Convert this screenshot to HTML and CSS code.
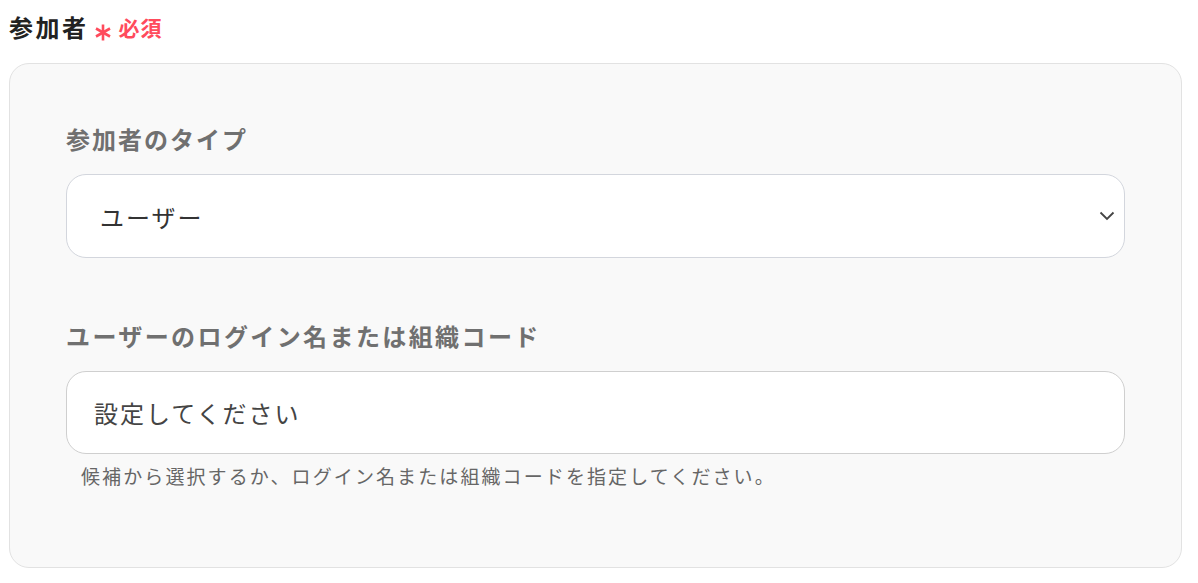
FILE: index.html
```html
<!DOCTYPE html>
<html lang="ja">
<head>
<meta charset="utf-8">
<link rel="stylesheet" href="styles.css">
</head>
<body>
<div class="page">
  <div class="title">
    <span class="title-text">参加者</span>
    <svg class="req-mark" width="16" height="17" viewBox="0 0 16 17"><g stroke="#ff4b5c" stroke-width="2.6" stroke-linecap="butt"><path d="M8 0.5 V16.5"/><path d="M1 4.5 L15 12.5"/><path d="M15 4.5 L1 12.5"/></g></svg>
    <span class="req-text">必須</span>
  </div>
  <div class="card">
    <div class="field">
      <div class="label">参加者のタイプ</div>
      <div class="select">
        <span class="select-value">ユーザー</span>
        <svg class="chevron" width="16" height="10" viewBox="0 0 16 10"><path d="M1.5 1.5 L8 8 L14.5 1.5" fill="none" stroke="#444" stroke-width="1.8"/></svg>
      </div>
    </div>
    <div class="field">
      <div class="label label-wide">ユーザーのログイン名または組織コード</div>
      <div class="input">設定してください</div>
      <div class="help">候補から選択するか、ログイン名または組織コードを指定してください。</div>
    </div>
  </div>
</div>
</body>
</html>
```
FILE: styles.css
```css
html, body {
  margin: 0;
  padding: 0;
  background: #fff;
  font-family: "Noto Sans CJK JP", "Noto Sans", sans-serif;
}
.page {
  padding: 6px 16px 0 9px;
}
.title {
  display: flex;
  align-items: center;
  height: 40px;
  margin-bottom: 17px;
}
.title-text {
  font-size: 24px;
  font-weight: 700;
  color: #222;
  letter-spacing: 2.5px;
}
.req-mark {
  margin-left: 6px;
  margin-top: 12px;
}
.req-text {
  color: #ff4b5c;
  font-size: 21px;
  font-weight: 700;
  margin-left: 8px;
  margin-top: 2px;
  letter-spacing: 1px;
}
.card {
  background: #f9f9f9;
  border: 1px solid #e2e2e2;
  border-radius: 20px;
  padding: 57px 56px 78px 56px;
  display: flex;
  flex-direction: column;
  gap: 60px;
}
.label {
  font-size: 24px;
  font-weight: 700;
  color: #707070;
  letter-spacing: 2px;
  line-height: 36px;
  margin-bottom: 17px;
}
.label-wide {
  letter-spacing: 2.4px;
}
.select, .input {
  background: #fff;
  border: 1px solid #d3d6dd;
  border-radius: 20px;
  box-sizing: border-box;
  display: flex;
  align-items: center;
  font-size: 24px;
  color: #333;
  letter-spacing: 2px;
}
.select {
  height: 84px;
  padding: 0 9px 0 33px;
  justify-content: space-between;
}
.input {
  height: 83px;
  border-color: #cfcfcf;
  padding-left: 27px;
  color: #444;
}
.help {
  font-size: 19px;
  color: #666;
  margin-top: 9px;
  padding-left: 15px;
  line-height: 26px;
  letter-spacing: 2.1px;
}
```
